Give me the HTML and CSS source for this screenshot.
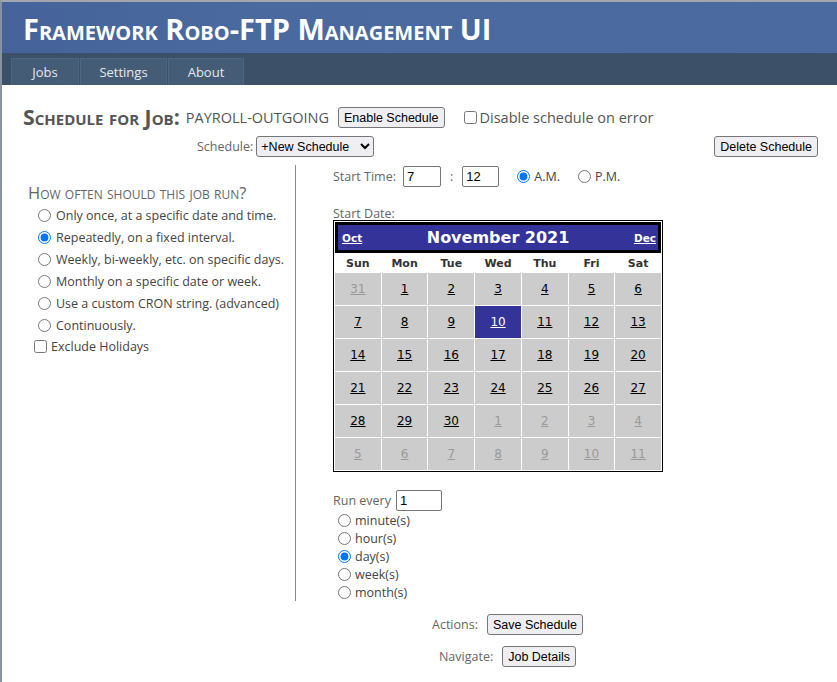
FILE: index.html
```html
<!DOCTYPE html>
<html>
<head>
<meta charset="utf-8">
<title>Framework Robo-FTP Management UI</title>
<link rel="stylesheet" href="styles.css">
</head>
<body>
<div class="frame">
  <header class="header">
    <h1 class="app-title">Framework Robo-FTP Management UI</h1>
  </header>
  <nav class="nav">
    <a class="tab tab-jobs">Jobs</a>
    <a class="tab tab-settings">Settings</a>
    <a class="tab tab-about">About</a>
  </nav>
  <main class="main">
    <div class="title-row">
      <h2 class="page-title">Schedule for Job:</h2>
      <span class="job-name">PAYROLL-OUTGOING</span>
      <button class="btn btn-enable">Enable Schedule</button>
      <label class="check disable-check"><input type="checkbox"><span>Disable schedule on error</span></label>
    </div>
    <div class="schedule-row">
      <span class="label sched-label">Schedule:</span>
      <select class="sched-select"><option>+New Schedule</option></select>
      <button class="btn btn-delete">Delete Schedule</button>
    </div>
    <div class="columns">
      <div class="left-col">
        <div class="how-often">How often should this job run?</div>
        <div class="radio-list">
          <label class="radio"><input type="radio" name="freq"><span>Only once, at a specific date and time.</span></label>
          <label class="radio"><input type="radio" name="freq" checked><span>Repeatedly, on a fixed interval.</span></label>
          <label class="radio"><input type="radio" name="freq"><span>Weekly, bi-weekly, etc. on specific days.</span></label>
          <label class="radio"><input type="radio" name="freq"><span>Monthly on a specific date or week.</span></label>
          <label class="radio"><input type="radio" name="freq"><span>Use a custom CRON string. (advanced)</span></label>
          <label class="radio"><input type="radio" name="freq"><span>Continuously.</span></label>
        </div>
        <label class="check holidays"><input type="checkbox"><span>Exclude Holidays</span></label>
      </div>
      <div class="right-col">
        <div class="time-row">
          <span class="label">Start Time:</span>
          <input class="txt txt-hour" type="text" value="7">
          <span class="label colon">:</span>
          <input class="txt txt-min" type="text" value="12">
          <label class="radio ampm am"><input type="radio" name="ampm" checked><span>A.M.</span></label>
          <label class="radio ampm pm"><input type="radio" name="ampm"><span>P.M.</span></label>
        </div>
        <div class="label start-date">Start Date:</div>
        <table class="cal">
          <tr>
            <td class="cal-title" colspan="7">
              <div class="cal-title-inner">
                <a class="cal-nav">Oct</a>
                <span class="cal-month">November 2021</span>
                <a class="cal-nav">Dec</a>
              </div>
            </td>
          </tr>
          <tr class="cal-dow">
            <th>Sun</th><th>Mon</th><th>Tue</th><th>Wed</th><th>Thu</th><th>Fri</th><th>Sat</th>
          </tr>
          <tr>
            <td class="day other"><a>31</a></td><td class="day"><a>1</a></td><td class="day"><a>2</a></td><td class="day"><a>3</a></td><td class="day"><a>4</a></td><td class="day"><a>5</a></td><td class="day"><a>6</a></td>
          </tr>
          <tr>
            <td class="day"><a>7</a></td><td class="day"><a>8</a></td><td class="day"><a>9</a></td><td class="day selected"><a>10</a></td><td class="day"><a>11</a></td><td class="day"><a>12</a></td><td class="day"><a>13</a></td>
          </tr>
          <tr>
            <td class="day"><a>14</a></td><td class="day"><a>15</a></td><td class="day"><a>16</a></td><td class="day"><a>17</a></td><td class="day"><a>18</a></td><td class="day"><a>19</a></td><td class="day"><a>20</a></td>
          </tr>
          <tr>
            <td class="day"><a>21</a></td><td class="day"><a>22</a></td><td class="day"><a>23</a></td><td class="day"><a>24</a></td><td class="day"><a>25</a></td><td class="day"><a>26</a></td><td class="day"><a>27</a></td>
          </tr>
          <tr>
            <td class="day"><a>28</a></td><td class="day"><a>29</a></td><td class="day"><a>30</a></td><td class="day other"><a>1</a></td><td class="day other"><a>2</a></td><td class="day other"><a>3</a></td><td class="day other"><a>4</a></td>
          </tr>
          <tr>
            <td class="day other"><a>5</a></td><td class="day other"><a>6</a></td><td class="day other"><a>7</a></td><td class="day other"><a>8</a></td><td class="day other"><a>9</a></td><td class="day other"><a>10</a></td><td class="day other"><a>11</a></td>
          </tr>
        </table>
        <div class="run-row">
          <span class="label run-label">Run every</span>
          <input class="txt txt-run" type="text" value="1">
        </div>
        <div class="unit-list">
          <label class="radio unit"><input type="radio" name="unit"><span>minute(s)</span></label>
          <label class="radio unit"><input type="radio" name="unit"><span>hour(s)</span></label>
          <label class="radio unit"><input type="radio" name="unit" checked><span>day(s)</span></label>
          <label class="radio unit"><input type="radio" name="unit"><span>week(s)</span></label>
          <label class="radio unit"><input type="radio" name="unit"><span>month(s)</span></label>
        </div>
      </div>
    </div>
    <div class="action-row">
      <span class="label">Actions:</span>
      <button class="btn">Save Schedule</button>
    </div>
    <div class="action-row nav-row">
      <span class="label">Navigate:</span>
      <button class="btn">Job Details</button>
    </div>
  </main>
</div>
</body>
</html>
```
FILE: styles.css
```css
* { box-sizing: border-box; }
html, body { margin: 0; padding: 0; background: #fff; }
body {
  font-family: "Open Sans", "Noto Sans", sans-serif;
  font-size: 12.5px;
  color: #444;
}
.frame {
  border-top: 2px solid #a3a7ad;
  border-left: 2px solid #8793a3;
  min-height: 682px;
}
.header {
  height: 51px;
  background: linear-gradient(to right, #45639a, #4a6a9f 30%, #4b6ba0);
  display: flex;
  align-items: center;
  padding-left: 21px;
}
.app-title {
  margin: 0;
  font-family: "Open Sans", sans-serif;
  font-weight: 700;
  font-variant: small-caps;
  font-size: 29px;
  color: #fff;
  line-height: 1;
  padding-top: 2px;
}
.nav {
  height: 32px;
  background: #3c5068;
  display: flex;
  align-items: flex-end;
  padding-left: 9px;
}
.tab {
  height: 27px;
  display: flex;
  align-items: center;
  justify-content: center;
  background: #455c76;
  border: 1px solid #4f6680;
  border-bottom: none;
  color: #e4e9ef;
  font-size: 13px;
  margin-right: 1px;
}
.tab-jobs { width: 68px; }
.tab-settings { width: 87px; }
.tab-about { width: 76px; }

.main { padding-left: 21px; padding-right: 19px; }

.title-row {
  display: flex;
  align-items: center;
  height: 20px;
  margin-top: 22px;
}
.page-title {
  margin: 0;
  font-size: 21.3px;
  font-weight: 700;
  font-variant: small-caps;
  color: #555;
  line-height: 20px;
}
.job-name {
  font-size: 14.5px;
  color: #555;
  margin-left: 6px;
}
.btn {
  font-family: "Liberation Sans", Arial, sans-serif;
  font-size: 12.5px;
  color: #000;
  background: #efeff3;
  border: 1px solid #767676;
  border-radius: 3px;
  height: 21px;
  padding: 1px 5px 0;
  line-height: 18px;
}
.btn-enable { margin-left: 9px; }
.check { display: inline-flex; align-items: center; }
.check input { margin: 0 4px 0 0; width: 13px; height: 13px; }
.disable-check { margin-left: 19px; font-size: 14.5px; color: #555; }
.disable-check input { margin-right: 3px; }

.schedule-row {
  display: flex;
  align-items: center;
  height: 21px;
  margin-top: 9px;
}
.label { color: #666; }
.sched-label { margin-left: 174px; }
.sched-select {
  margin-left: 3px;
  font-family: "Liberation Sans", Arial, sans-serif;
  font-size: 12.5px;
  color: #000;
  height: 21px;
  width: 118px;
  border: 1px solid #767676;
  border-radius: 3px;
  background: #efeff3;
}
.btn-delete { margin-left: auto; }

.columns { display: flex; margin-top: 8px; }
.left-col {
  width: 273px;
  border-right: 1px solid #8a8a8a;
  height: 436px;
  padding-top: 19px;
  padding-left: 5px;
}
.how-often {
  font-variant: small-caps;
  font-size: 16.5px;
  color: #666;
  line-height: 18px;
}
.radio-list { margin-top: 2px; padding-left: 10px; }
.radio { display: flex; align-items: center; height: 22px; color: #444; }
.radio input { margin: 0 5px 0 0; width: 13px; height: 13px; }
.holidays { margin-left: 6px; height: 20px; color: #444; }
.holidays input { margin-right: 4px; }

.right-col { padding-left: 37px; }
.time-row { display: flex; align-items: center; height: 22px; margin-top: 0; }
.txt {
  font-family: "Liberation Sans", Arial, sans-serif;
  font-size: 13px;
  color: #000;
  height: 21px;
  border: 1px solid #767676;
  border-radius: 2px;
  padding: 1px 3px;
}
.txt-hour { width: 38px; margin-left: 7px; }
.colon { margin-left: 9px; }
.txt-min { width: 37px; margin-left: 9px; }
.ampm { height: 22px; }
.am { margin-left: 18px; }
.pm { margin-left: 18px; }
.ampm input { margin-right: 4px; }

.start-date { margin-top: 18px; line-height: 18px; }

.cal {
  border: 1px solid #000;
  border-spacing: 1px;
  width: 330px;
  font-family: "DejaVu Sans", Verdana, sans-serif;
  font-size: 12px;
  background: #fff;
  margin-top: -3px;
}
.cal td, .cal th { padding: 0; }
.cal-title {
  background: #333399;
  border: 3px solid #000;
  height: 31px;
}
.cal-title-inner {
  display: flex;
  align-items: center;
  justify-content: space-between;
  padding: 0 2px 0 4px;
}
.cal-nav {
  color: #fff;
  font-weight: 700;
  font-size: 10.5px;
  text-decoration: underline;
}
.cal-month {
  color: #fff;
  font-weight: 700;
  font-size: 16px;
}
.cal-dow th {
  height: 18px;
  font-size: 11px;
  font-weight: 700;
  color: #333;
}
.day {
  background: #ccc;
  height: 32px;
  width: 46px;
  text-align: center;
}
.day a { color: #000; text-decoration: underline; }
.day.other a { color: #999; }
.day.selected { background: #333399; }
.day.selected a { color: #fff; }

.run-row { display: flex; align-items: center; margin-top: 17px; height: 22px; }
.txt-run { width: 46px; margin-left: 5px; }
.unit-list { padding-left: 5px; }
.unit { height: 18px; }
.unit input { margin-right: 4px; }

.action-row {
  display: flex;
  align-items: center;
  justify-content: center;
  gap: 9px;
  height: 21px;
  margin-top: 13px;
  padding-left: 174px;
}
.nav-row { margin-top: 11px; }
```
